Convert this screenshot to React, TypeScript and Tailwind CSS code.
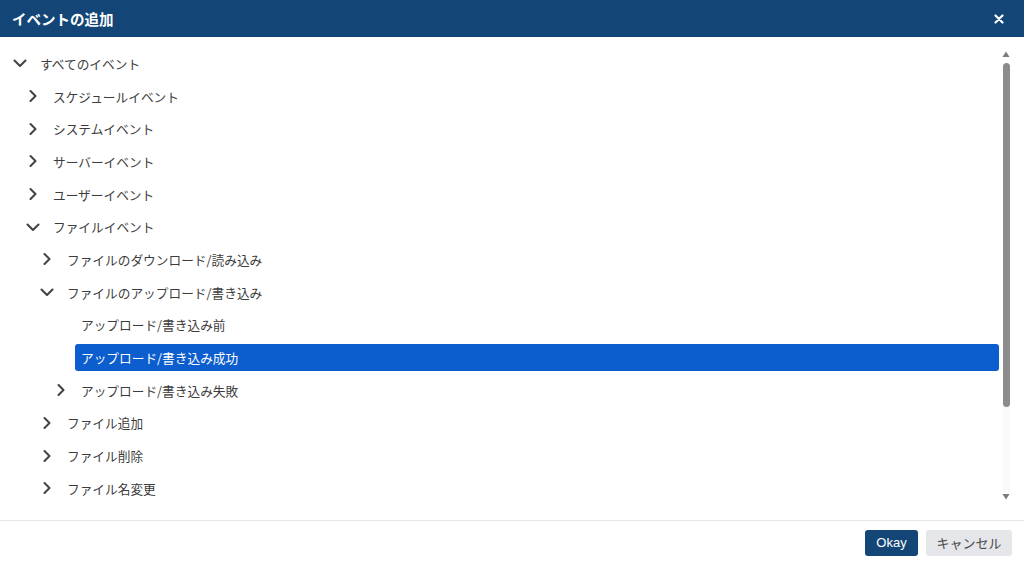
import React from "react";

type Node = {
  label: string;
  depth: number;
  chevron: "right" | "down" | "none";
  selected?: boolean;
};

const rows: Node[] = [
  { label: "すべてのイベント", depth: 0, chevron: "down" },
  { label: "スケジュールイベント", depth: 1, chevron: "right" },
  { label: "システムイベント", depth: 1, chevron: "right" },
  { label: "サーバーイベント", depth: 1, chevron: "right" },
  { label: "ユーザーイベント", depth: 1, chevron: "right" },
  { label: "ファイルイベント", depth: 1, chevron: "down" },
  { label: "ファイルのダウンロード/読み込み", depth: 2, chevron: "right" },
  { label: "ファイルのアップロード/書き込み", depth: 2, chevron: "down" },
  { label: "アップロード/書き込み前", depth: 3, chevron: "none" },
  { label: "アップロード/書き込み成功", depth: 3, chevron: "none", selected: true },
  { label: "アップロード/書き込み失敗", depth: 3, chevron: "right" },
  { label: "ファイル追加", depth: 2, chevron: "right" },
  { label: "ファイル削除", depth: 2, chevron: "right" },
  { label: "ファイル名変更", depth: 2, chevron: "right" },
];

const indent = ["pl-[12px]", "pl-[25px]", "pl-[39px]", "pl-[53px]"];

const jp = "font-['Noto_Sans_CJK_JP','Noto_Sans',sans-serif]";

function Chevron({ dir }: { dir: "right" | "down" | "none" }) {
  if (dir === "none") return <span className="w-[16px] shrink-0" />;
  return (
    <span className="w-[16px] h-[16px] shrink-0 flex items-center justify-center">
      <svg width="14" height="14" viewBox="0 0 14 14" fill="none">
        {dir === "right" ? (
          <polyline
            points="4.5,2 9.5,7 4.5,12"
            stroke="#444"
            strokeWidth="2.1"
            strokeLinecap="round"
            strokeLinejoin="round"
          />
        ) : (
          <polyline
            points="1.5,4.5 7,10 12.5,4.5"
            stroke="#444"
            strokeWidth="2.1"
            strokeLinecap="round"
            strokeLinejoin="round"
          />
        )}
      </svg>
    </span>
  );
}

function TreeRow({ node }: { node: Node }) {
  return (
    <div className={`h-[32.7px] flex items-center ${indent[node.depth]}`}>
      <Chevron dir={node.chevron} />
      <div
        className={`ml-[6px] flex-1 h-[27px] flex items-center pl-[6px] rounded-[3px] text-[12.7px] ${
          node.selected ? "bg-[#0c5dcd] text-white" : "text-[#3c3c3c]"
        }`}
      >
        {node.label}
      </div>
    </div>
  );
}

function Scrollbar() {
  return (
    <div className="w-[14px] flex flex-col items-center pt-[14px] pb-[20px]">
      <svg width="8" height="7" viewBox="0 0 8 7">
        <polygon points="4,0.5 7.5,6 0.5,6" fill="#7a7a7a" />
      </svg>
      <div className="mt-[5px] w-[7px] h-[344px] rounded-full bg-[#8c8c8c]" />
      <div className="flex-1 w-[7px] bg-[#fafafa]" />
      <svg width="8" height="7" viewBox="0 0 8 7">
        <polygon points="0.5,1 7.5,1 4,6.5" fill="#7a7a7a" />
      </svg>
    </div>
  );
}

export default function App() {
  return (
    <div className={`w-[1024px] h-[564px] flex flex-col bg-white ${jp}`}>
      <div className="h-[37px] shrink-0 bg-[#134677] flex items-center justify-between pl-[12px] pr-[20px]">
        <span className="text-white font-bold text-[14.5px]">イベントの追加</span>
        <svg width="10" height="10" viewBox="0 0 10 10">
          <path
            d="M1.5 1.5 L8.5 8.5 M8.5 1.5 L1.5 8.5"
            stroke="white"
            strokeWidth="2.2"
            strokeLinecap="round"
          />
        </svg>
      </div>
      <div className="h-[483px] shrink-0 flex pr-[11px]">
        <div className="flex-1 pt-[10px]">
          {rows.map((r) => (
            <TreeRow key={r.label} node={r} />
          ))}
        </div>
        <Scrollbar />
      </div>
      <div className="flex-1 border-t border-[#e6e6e6] flex items-center justify-end gap-[8px] pr-[12px]">
        <button className="h-[26px] w-[53px] rounded-[3px] bg-[#134677] text-white text-[13px] font-['Liberation_Sans',Arial,sans-serif]">
          Okay
        </button>
        <button className="h-[26px] w-[86px] rounded-[3px] bg-[#e4e6e9] text-[#4a4a4a] text-[13px]">
          キャンセル
        </button>
      </div>
    </div>
  );
}
